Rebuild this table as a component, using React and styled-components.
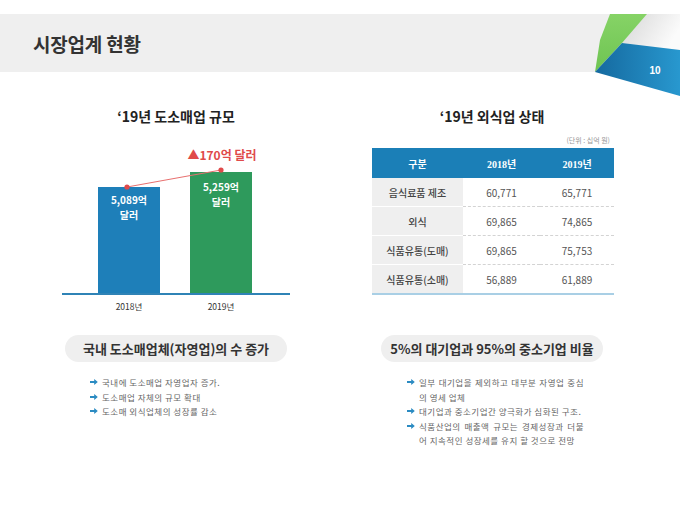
import React from 'react';
import styled, { createGlobalStyle } from 'styled-components';

const GlobalStyle = createGlobalStyle`
  html, body {
    margin: 0;
    padding: 0;
    background: #ffffff;
  }
  body {
    font-family: "Noto Sans CJK KR", "Noto Sans", sans-serif;
    color: #333;
  }
`;

const Page = styled.div`
  position: relative;
  width: 680px;
  height: 510px;
  padding-top: 14px;
  box-sizing: border-box;
  overflow: hidden;
  background: #fff;
`;

const Header = styled.header`
  height: 58px;
  background: #efefef;
  display: flex;
  align-items: center;
  padding-left: 33px;
`;

const PageTitle = styled.h1`
  margin: 0;
  font-size: 19px;
  font-weight: 700;
  color: #333;
  letter-spacing: -0.2px;
`;

const Corner = styled.svg`
  position: absolute;
  top: 0;
  right: 0;
`;

const Content = styled.main`
  display: grid;
  grid-template-columns: 280px 260px;
  grid-template-rows: 263px auto;
  column-gap: 46px;
  padding-left: 36px;
`;

const Column = styled.section`
  display: flex;
  flex-direction: column;
  align-items: ${(p) => p.$align || 'stretch'};
`;

const SectionTitle = styled.h2`
  margin: 34px 0 0;
  font-size: 14px;
  line-height: 20px;
  font-weight: 700;
  text-align: center;
  color: #222;
`;

/* ---------- bar chart ---------- */

const Chart = styled.div`
  margin-left: 26px;
  width: 228px;
`;

const Plot = styled.div`
  position: relative;
  height: 167px;
  display: flex;
  align-items: flex-end;
  gap: 30px;
  padding-left: 36px;
  border-bottom: 2px solid #2f83b6;
`;

const BarSlot = styled.div`
  width: 62px;
  display: flex;
  flex-direction: column;
  align-items: center;
`;

const Bar = styled.div`
  width: 100%;
  background: ${(p) => p.$color};
  color: #fff;
  font-size: 10px;
  font-weight: 700;
  line-height: 14.5px;
  text-align: center;
  padding-top: ${(p) => p.$pad}px;
  box-sizing: border-box;
`;

const Increase = styled.div`
  color: #e04a4a;
  font-size: 12px;
  font-weight: 700;
  white-space: nowrap;
  margin-bottom: 9px;
  margin-left: 2px;
`;

const Trend = styled.svg`
  position: absolute;
  left: 0;
  top: 0;
  overflow: visible;
`;

const Axis = styled.div`
  display: flex;
  gap: 30px;
  padding-left: 36px;
  margin-top: 5px;
`;

const AxisLabel = styled.span`
  width: 62px;
  text-align: center;
  font-size: 8.5px;
  line-height: 12px;
  color: #333;
`;

/* ---------- table ---------- */

const Unit = styled.div`
  align-self: flex-end;
  margin: 9px 12px 3px 0;
  font-size: 7px;
  line-height: 10px;
  color: #999;
`;

const Table = styled.table`
  margin-left: 10px;
  width: 242px;
  border-collapse: collapse;
  table-layout: fixed;
  border-bottom: 2px solid #a9cfe5;
`;

const Th = styled.th`
  height: 30px;
  padding: 0;
  background: #1b7fb7;
  color: #fff;
  font-family: "Liberation Serif", "Noto Sans CJK KR", serif;
  font-size: 10px;
  font-weight: 700;
  width: ${(p) => p.$w}px;
`;

const Td = styled.td`
  height: 28px;
  padding: 0;
  text-align: center;
  font-size: 10px;
  color: #555;
  border-bottom: 1px dashed #d3d3d3;
  tr:last-child & {
    border-bottom: none;
  }
`;

const LabelTd = styled(Td)`
  background: #efefef;
  color: #444;
  font-weight: 500;
  border-bottom: 1px solid #fff;
`;

/* ---------- bottom notes ---------- */

const Pill = styled.div`
  width: 222px;
  height: 27px;
  border-radius: 14px;
  background: #efefef;
  display: flex;
  align-items: center;
  justify-content: center;
  font-size: 13px;
  font-weight: 700;
  color: #333;
  white-space: nowrap;
`;

const List = styled.ul`
  list-style: none;
  margin: 13px 0 0 ${(p) => p.$indent}px;
  padding: 0;
  width: ${(p) => p.$width}px;
  align-self: flex-start;
`;

const Item = styled.li`
  display: flex;
  align-items: flex-start;
  gap: 4px;
  font-size: 8.5px;
  line-height: 14.5px;
  color: #666;
  letter-spacing: 0.5px;
`;

const ItemText = styled.span`
  flex: 1;
  text-align: justify;
  word-break: break-all;
`;

const ArrowIcon = () => (
  <svg width="8" height="14" viewBox="0 0 8 14" style={{ flex: 'none' }}>
    <path d="M0 6.1h4.2V4l3.6 3-3.6 3V7.9H0z" fill="#2b8bc2" />
  </svg>
);

const bars = [
  { year: '2018년', value: 5089, height: 106, color: '#1e7fb9', pad: 6 },
  { year: '2019년', value: 5259, height: 121, color: '#2e9a5c', pad: 8 },
];

const rows = [
  ['음식료품 제조', '60,771', '65,771'],
  ['외식', '69,865', '74,865'],
  ['식품유통(도매)', '69,865', '75,753'],
  ['식품유통(소매)', '56,889', '61,889'],
];

const leftNotes = [
  '국내에 도소매업 자영업자 증가.',
  '도소매업 자체의 규모 확대',
  '도소매 외식업체의 성장률 감소',
];

const rightNotes = [
  '일부 대기업을 제외하고 대부분 자영업 중심의 영세 업체',
  '대기업과 중소기업간 양극화가 심화된 구조.',
  '식품산업의 매출액 규모는 경제성장과 더불어 지속적인 성장세를 유지 할 것으로 전망',
];

const App = () => {
  const plotH = 167;
  return (
    <Page>
      <GlobalStyle />
      <Header>
        <PageTitle>시장업계 현황</PageTitle>
      </Header>

      <Corner width="92" height="100" viewBox="588 0 92 100">
        <defs>
          <linearGradient id="curl" x1="0" y1="0" x2="1" y2="0.4">
            <stop offset="0" stopColor="#d6d6d6" />
            <stop offset="1" stopColor="#fbfbfb" />
          </linearGradient>
          <linearGradient id="leaf" x1="0" y1="0" x2="0" y2="1">
            <stop offset="0" stopColor="#86d366" />
            <stop offset="1" stopColor="#6ec452" />
          </linearGradient>
          <linearGradient id="wave" x1="0" y1="0" x2="1" y2="0">
            <stop offset="0" stopColor="#15699f" />
            <stop offset="1" stopColor="#2898cf" />
          </linearGradient>
        </defs>
        <polygon points="647,14 680,14 680,50 622,43" fill="url(#curl)" />
        <polygon points="610,14 647,14 622,43 595,72 600,40" fill="url(#leaf)" />
        <polygon points="595,72 622,43 680,50 680,96" fill="url(#wave)" />
        <text
          x="655"
          y="74"
          textAnchor="middle"
          fill="#fff"
          fontSize="10"
          fontWeight="700"
          fontFamily="Liberation Sans, sans-serif"
        >
          10
        </text>
      </Corner>

      <Content>
        <Column>
          <SectionTitle>‘19년 도소매업 규모</SectionTitle>
          <Chart>
            <Plot>
              {bars.map((b, i) => (
                <BarSlot key={b.year}>
                  {i === 1 && <Increase>▲170억 달러</Increase>}
                  <Bar $color={b.color} $pad={b.pad} style={{ height: b.height }}>
                    {b.value.toLocaleString('en-US')}억
                    <br />
                    달러
                  </Bar>
                </BarSlot>
              ))}
              <Trend width="228" height={plotH}>
                <line
                  x1="65"
                  y1={plotH - 106}
                  x2="159"
                  y2={plotH - 123}
                  stroke="#e8706f"
                  strokeWidth="1"
                />
                <circle cx="65" cy={plotH - 106} r="2.6" fill="#e04a4a" />
                <circle cx="159" cy={plotH - 123} r="2.6" fill="#e04a4a" />
              </Trend>
            </Plot>
            <Axis>
              {bars.map((b) => (
                <AxisLabel key={b.year}>{b.year}</AxisLabel>
              ))}
            </Axis>
          </Chart>
        </Column>

        <Column>
          <SectionTitle>‘19년 외식업 상태</SectionTitle>
          <Unit>(단위 : 십억 원)</Unit>
          <Table>
            <thead>
              <tr>
                <Th $w={91}>구분</Th>
                <Th $w={77}>2018년</Th>
                <Th $w={74}>2019년</Th>
              </tr>
            </thead>
            <tbody>
              {rows.map((r) => (
                <tr key={r[0]}>
                  <LabelTd>{r[0]}</LabelTd>
                  <Td>{r[1]}</Td>
                  <Td>{r[2]}</Td>
                </tr>
              ))}
            </tbody>
          </Table>
        </Column>

        <Column $align="center">
          <Pill>국내 도소매업체(자영업)의 수 증가</Pill>
          <List $indent={54} $width={220}>
            {leftNotes.map((t) => (
              <Item key={t}>
                <ArrowIcon />
                <ItemText>{t}</ItemText>
              </Item>
            ))}
          </List>
        </Column>

        <Column $align="center">
          <Pill>5%의 대기업과 95%의 중소기업 비율</Pill>
          <List $indent={45} $width={177}>
            {rightNotes.map((t) => (
              <Item key={t}>
                <ArrowIcon />
                <ItemText>{t}</ItemText>
              </Item>
            ))}
          </List>
        </Column>
      </Content>
    </Page>
  );
};

export default App;
